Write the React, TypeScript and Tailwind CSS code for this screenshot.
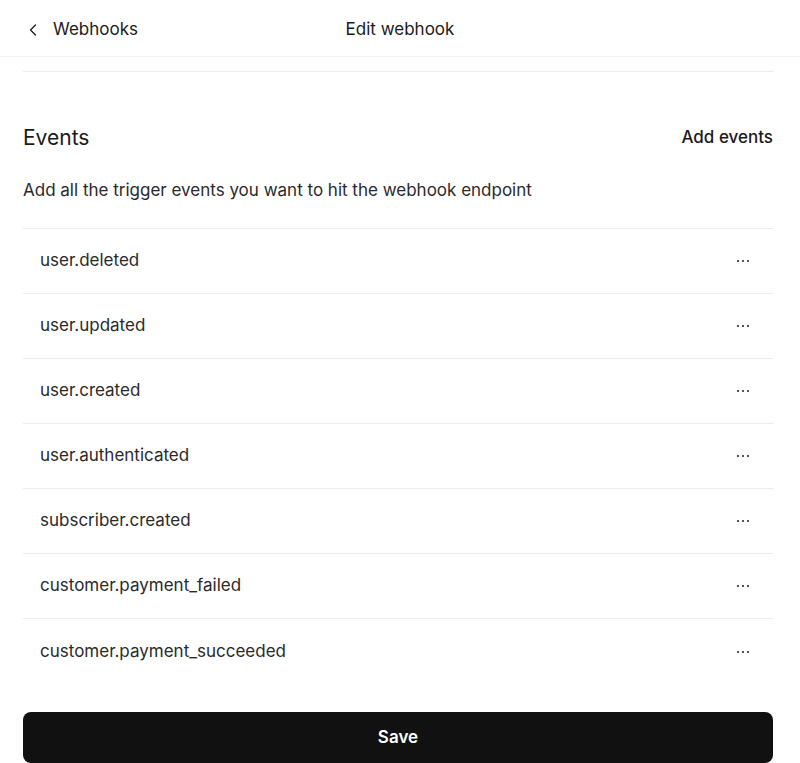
import { ChevronLeft } from 'lucide-react'

const EVENTS = [
  'user.deleted',
  'user.updated',
  'user.created',
  'user.authenticated',
  'subscriber.created',
  'customer.payment_failed',
  'customer.payment_succeeded',
]

export default function App() {
  return (
    <div className="min-h-[763px] bg-white text-[#1a1a1a] font-['Inter',sans-serif]">
      {/* Header */}
      <header className="relative h-[57px] flex items-center pl-[23px] pr-[27px] pt-[3px] border-b border-[#f3f3f3]">
        <button className="flex items-center gap-[10px] text-[17px]">
          <ChevronLeft className="w-5 h-5" strokeWidth={1.5} />
          <span>Webhooks</span>
        </button>
        <h1 className="absolute left-1/2 -translate-x-1/2 text-[17px]">Edit webhook</h1>
      </header>

      <div className="pl-[23px] pr-[27px]">
        <div className="h-[15px] border-b border-[#ececec]" />

        {/* Events */}
        <div className="flex items-center justify-between pt-[50px]">
          <h2 className="text-[21px]">Events</h2>
          <button className="text-[17px] font-medium">Add events</button>
        </div>
        <p className="mt-[24px] text-[17px] text-[#2a2a2a]">
          Add all the trigger events you want to hit the webhook endpoint
        </p>

        <ul className="mt-[25px] border-t border-[#ececec]">
          {EVENTS.map((e, i) => (
            <li
              key={e}
              className={`h-[65px] flex items-center justify-between pl-[17px] pr-[24px] ${i < EVENTS.length - 1 ? 'border-b border-[#ececec]' : ''}`}
            >
              <span className="text-[17px] text-[#2a2a2a]">{e}</span>
              <span className="flex gap-[3px]">
                <span className="w-[2px] h-[2px] bg-[#555]" />
                <span className="w-[2px] h-[2px] bg-[#555]" />
                <span className="w-[2px] h-[2px] bg-[#555]" />
              </span>
            </li>
          ))}
        </ul>

        <button className="mt-[28px] w-full h-[51px] rounded-[8px] bg-[#111] text-white text-[17px] font-semibold">
          Save
        </button>
      </div>
    </div>
  )
}
